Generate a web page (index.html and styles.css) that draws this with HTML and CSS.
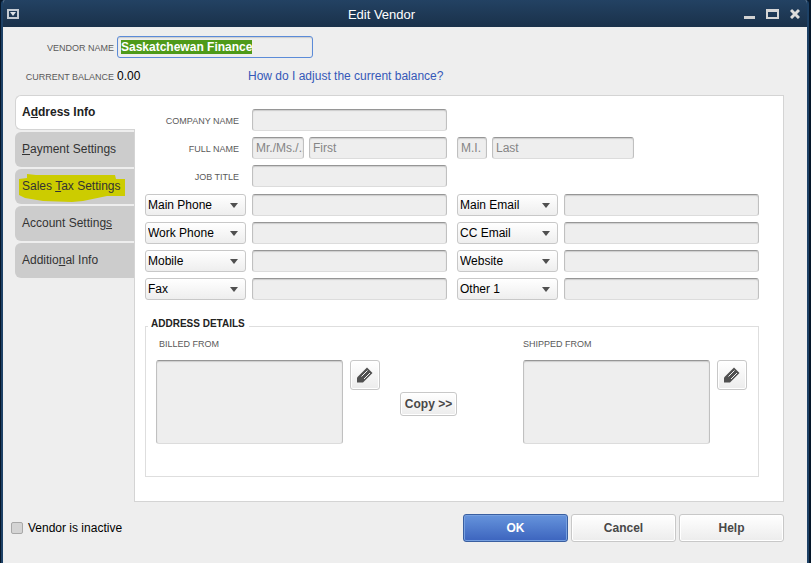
FILE: index.html
```html
<!DOCTYPE html>
<html lang="en">
<head>
    <meta charset="UTF-8">
    <meta name="viewport" content="width=device-width, initial-scale=1.0">
    <title>Edit Vendor</title>
    <link rel="stylesheet" href="styles.css">
</head>
<body>

    <div class="window">
        <!-- Title bar -->
        <header class="titlebar">
            <button class="title-btn" aria-label="Window menu">
                <svg width="12" height="10" viewBox="0 0 12 10"><rect x="1" y="1" width="10" height="8" fill="none" stroke="#c4cbd3" stroke-width="2"/><path d="M3 3h6L6 7z" fill="#dfe3e7"/></svg>
            </button>
            <h1 class="title">Edit Vendor</h1>
            <div class="title-actions">
                <button class="title-btn" aria-label="Minimize">
                    <svg width="11" height="11" viewBox="0 0 11 11"><path d="M0 8h11v3H0z" fill="#d2d2d2"/></svg>
                </button>
                <button class="title-btn" aria-label="Maximize">
                    <svg width="13" height="11" viewBox="0 0 13 11"><path d="M0 1h13v10H0zM2 4v5h9V4z" fill="#d6d6d6" fill-rule="evenodd"/></svg>
                </button>
                <button class="title-btn" aria-label="Close">
                    <svg width="10" height="11" viewBox="0 0 10 11"><path d="M1 2l8 8M9 2l-8 8" stroke="#dcdcdc" stroke-width="3"/></svg>
                </button>
            </div>
        </header>

        <!-- Vendor name and balance -->
        <div class="summary">
            <label class="caption" for="vendor-name">VENDOR NAME</label>
            <input class="field vendor-name" id="vendor-name" type="text" value="Saskatchewan Finance">
            <span class="caption">CURRENT BALANCE</span>
            <div class="balance">
                <span class="balance-value">0.00</span>
                <a class="help-link" href="#">How do I adjust the current balance?</a>
            </div>
        </div>

        <div class="main">
            <nav class="tabs">
                <a class="tab active" href="#">A<u>d</u>dress Info</a>
                <a class="tab" href="#"><u>P</u>ayment Settings</a>
                <a class="tab marked" href="#">
                    <svg class="marker" width="120" height="35" viewBox="0 0 120 35"><path d="M4 10l8-1V5l9 1h79l1 4h9v17H92l-24 5-11 1-29-1-18-3-6-3z" fill="#cccc00"/></svg>
                    <span class="tab-text">Sales <u>T</u>ax Settings</span>
                </a>
                <a class="tab" href="#">Account Setting<u>s</u></a>
                <a class="tab" href="#">Additio<u>n</u>al Info</a>
            </nav>

            <section class="panel">
                <div class="form-grid">
                    <div class="form-row first-col">
                        <label class="caption" for="company">COMPANY NAME</label>
                        <input class="field" id="company" type="text">
                    </div>
                    <div class="form-row first-col">
                        <label class="caption" for="first">FULL NAME</label>
                        <div class="name-group">
                            <input class="field salutation" type="text" placeholder="Mr./Ms./.." aria-label="Salutation">
                            <input class="field" id="first" type="text" placeholder="First">
                        </div>
                    </div>
                    <div class="name-group">
                        <input class="field middle" type="text" placeholder="M.I." aria-label="Middle initial">
                        <input class="field last" type="text" placeholder="Last" aria-label="Last name">
                    </div>
                    <div class="form-row first-col">
                        <label class="caption" for="job">JOB TITLE</label>
                        <input class="field" id="job" type="text">
                    </div>
                </div>

                <!-- Phones, emails and other contacts -->
                <div class="form-grid contacts">
                    <div class="form-row">
                        <select class="picker" aria-label="Contact type 1"><option>Main Phone</option></select>
                        <input class="field" type="text" aria-label="Main phone">
                    </div>
                    <div class="form-row">
                        <select class="picker" aria-label="Contact type 2"><option>Main Email</option></select>
                        <input class="field" type="text" aria-label="Main email">
                    </div>
                    <div class="form-row">
                        <select class="picker" aria-label="Contact type 3"><option>Work Phone</option></select>
                        <input class="field" type="text" aria-label="Work phone">
                    </div>
                    <div class="form-row">
                        <select class="picker" aria-label="Contact type 4"><option>CC Email</option></select>
                        <input class="field" type="text" aria-label="CC email">
                    </div>
                    <div class="form-row">
                        <select class="picker" aria-label="Contact type 5"><option>Mobile</option></select>
                        <input class="field" type="text" aria-label="Mobile">
                    </div>
                    <div class="form-row">
                        <select class="picker" aria-label="Contact type 6"><option>Website</option></select>
                        <input class="field" type="text" aria-label="Website">
                    </div>
                    <div class="form-row">
                        <select class="picker" aria-label="Contact type 7"><option>Fax</option></select>
                        <input class="field" type="text" aria-label="Fax">
                    </div>
                    <div class="form-row">
                        <select class="picker" aria-label="Contact type 8"><option>Other 1</option></select>
                        <input class="field" type="text" aria-label="Other 1">
                    </div>
                </div>

                <fieldset class="address">
                    <legend>ADDRESS DETAILS</legend>
                    <div class="address-row">
                        <div class="address-block billed">
                            <label class="caption" for="billed">BILLED FROM</label>
                            <div class="address-edit">
                                <textarea class="field" id="billed"></textarea>
                                <button class="btn edit" aria-label="Edit billed from">
                                    <svg width="16" height="16" viewBox="0 0 16 16"><path d="M0 15.500V10.500L10 0.500l5.500 5.500L6 15.500z" fill="#505050"/><path d="M4.500 9.500l6-6M7 12l6-6" stroke="#f4f4f4" stroke-width="1"/></svg>
                                </button>
                            </div>
                        </div>
                        <button class="btn copy">Copy &gt;&gt;</button>
                        <div class="address-block shipped">
                            <label class="caption" for="shipped">SHIPPED FROM</label>
                            <div class="address-edit">
                                <textarea class="field" id="shipped"></textarea>
                                <button class="btn edit" aria-label="Edit shipped from">
                                    <svg width="16" height="16" viewBox="0 0 16 16"><path d="M0 15.500V10.500L10 0.500l5.500 5.500L6 15.500z" fill="#505050"/><path d="M4.500 9.500l6-6M7 12l6-6" stroke="#f4f4f4" stroke-width="1"/></svg>
                                </button>
                            </div>
                        </div>
                    </div>
                </fieldset>
            </section>
        </div>

        <footer class="footer">
            <label class="inactive"><input type="checkbox"> Vendor is inactive</label>
            <div class="actions">
                <button class="btn primary">OK</button>
                <button class="btn">Cancel</button>
                <button class="btn">Help</button>
            </div>
        </footer>
    </div>

    <script>
        // Start with the vendor name selected
        const vendorName = document.getElementById("vendor-name");
        vendorName.focus();
        vendorName.select();
    </script>

</body>
</html>
```
FILE: styles.css
```css
* {
    box-sizing: border-box;
}
body {
    margin: 0;
    padding: 0 2px 0 1px;
    background-color: #06172a;
    font-family: "Liberation Sans", Arial, sans-serif;
    font-size: 12px;
    line-height: 16px;
    color: #000;
}
button, input, select, textarea {
    font: inherit;
    margin: 0;
}
.window {
    min-height: 100vh;
    border: solid #1d4166;
    border-width: 0 2px;
    border-radius: 4px 4px 0 0;
    background-color: #eee;
    overflow: hidden;
}
.titlebar {
    display: flex;
    align-items: center;
    height: 27px;
    padding: 0 7px 0 4px;
    background: linear-gradient(#234263, #1a314a);
}
.title {
    flex: 1;
    margin: 0;
    padding-top: 2px;
    font-size: 13px;
    font-weight: normal;
    text-align: center;
    color: #fff;
}
.title-actions {
    display: flex;
    gap: 11px;
}
.title-btn {
    display: flex;
    padding: 0;
    border: none;
    background: none;
}
.summary {
    display: grid;
    grid-template-columns: 111px 1fr;
    column-gap: 3px;
    row-gap: 9px;
    align-items: center;
    padding: 9px 23px 0 0;
}
.caption {
    padding-top: 2px;
    font-size: 9px;
    text-align: right;
    color: #5a5a5a;
}
.field {
    width: 100%;
    min-width: 0;
    height: 22px;
    padding: 0 0 0 3px;
    border: 1px solid #c0c0c0;
    border-top-color: #969696;
    border-bottom-color: #dcdcdc;
    border-radius: 3px;
    background-color: #eee;
    box-shadow: inset 0 1px 1px #ccc;
    outline: none;
}
.field::placeholder {
    color: #858585;
}
.vendor-name {
    width: 196px;
    font-weight: bold;
    border-color: #5b8bd8;
}
.vendor-name::selection {
    background-color: #4e9a19;
    color: #fff;
}
.balance {
    display: flex;
}
.balance-value {
    width: 131px;
}
.help-link {
    color: #3558b8;
    text-decoration: none;
}
.main {
    display: flex;
    margin: 10px 23px 0 12px;
}
.tabs {
    display: flex;
    flex-direction: column;
    gap: 2px;
    width: 119px;
}
.tab {
    position: relative;
    height: 35px;
    padding: 9px 0 0 7px;
    border-radius: 6px 0 0 6px;
    background-color: #ccc;
    color: #333;
    text-decoration: none;
    white-space: nowrap;
}
.tab.active {
    z-index: 1;
    margin-right: -1px;
    padding: 8px 0 0 6px;
    border: 1px solid #d4d4d4;
    border-right: none;
    background-color: #fff;
    font-weight: bold;
    color: #222;
}
.marker {
    position: absolute;
    top: 0;
    left: 0;
}
.tab-text {
    position: relative;
}
.panel {
    flex: 1;
    min-width: 0;
    padding: 13px 24px 24px 10px;
    border: 1px solid #d4d4d4;
    background-color: #fff;
}
.form-grid {
    display: grid;
    grid-template-columns: 1fr 1fr;
    gap: 6px 10px;
}
.contacts {
    margin-top: 7px;
}
.first-col {
    grid-column: 1;
}
.form-row {
    display: grid;
    grid-template-columns: 101px 1fr;
    column-gap: 6px;
    align-items: center;
}
.form-row .caption {
    padding-right: 7px;
}
.name-group {
    display: flex;
    gap: 5px;
}
.name-group .salutation {
    flex: none;
    width: 52px;
}
.name-group .middle {
    flex: none;
    width: 30px;
}
.name-group .last {
    width: 142px;
}
.picker {
    appearance: none;
    width: 100%;
    height: 22px;
    padding: 0 20px 0 2px;
    border: 1px solid #c8c8c8;
    border-radius: 3px;
    color: #000;
    background: url("data:image/svg+xml,%3Csvg xmlns='http://www.w3.org/2000/svg' width='8' height='5'%3E%3Cpath d='M0 0h8L4 5z' fill='%23505050'/%3E%3C/svg%3E") no-repeat right 7px center, linear-gradient(#fff, #eee);
}
.address {
    min-width: 0;
    margin: 18px 0 0;
    padding: 0 11px 32px 10px;
    border: 1px solid #dedede;
}
.address legend {
    margin-left: -8px;
    padding: 0 4px 4px 3px;
    font-size: 10px;
    line-height: 12px;
    font-weight: bold;
    color: #222;
}
.address-row {
    display: flex;
    align-items: flex-start;
}
.address-block .caption {
    display: block;
    text-align: left;
}
.address-block.billed .caption {
    padding-left: 3px;
}
.address-edit {
    display: flex;
    align-items: flex-start;
    gap: 7px;
    margin-top: 8px;
}
.address-edit textarea {
    width: 187px;
    height: 84px;
    resize: none;
}
.shipped {
    margin-left: auto;
}
.btn {
    width: 105px;
    height: 28px;
    padding: 0;
    border: 1px solid #c8c8c8;
    border-radius: 3px;
    background: linear-gradient(#fff, #ececec);
    box-shadow: inset 0 0 0 1px #fff;
    font-weight: bold;
    color: #484848;
}
.btn.edit {
    display: flex;
    align-items: center;
    justify-content: center;
    width: 30px;
    height: 30px;
}
.btn.copy {
    width: 57px;
    height: 24px;
    margin: 58px 0 0 20px;
}
.btn.primary {
    border-color: #3a5fa0;
    background: linear-gradient(#6694dc, #3c64be);
    box-shadow: inset 0 0 0 1px #77a0e0;
    color: #fff;
}
.footer {
    display: flex;
    align-items: center;
    justify-content: space-between;
    padding: 12px 23px 21px 8px;
}
.inactive {
    display: flex;
    align-items: center;
    gap: 5px;
}
.inactive input {
    appearance: none;
    width: 12px;
    height: 12px;
    border: 1px solid #a8a8a8;
    border-radius: 2px;
    background-color: #d4d4d4;
}
.actions {
    display: flex;
    gap: 3px;
}
```
